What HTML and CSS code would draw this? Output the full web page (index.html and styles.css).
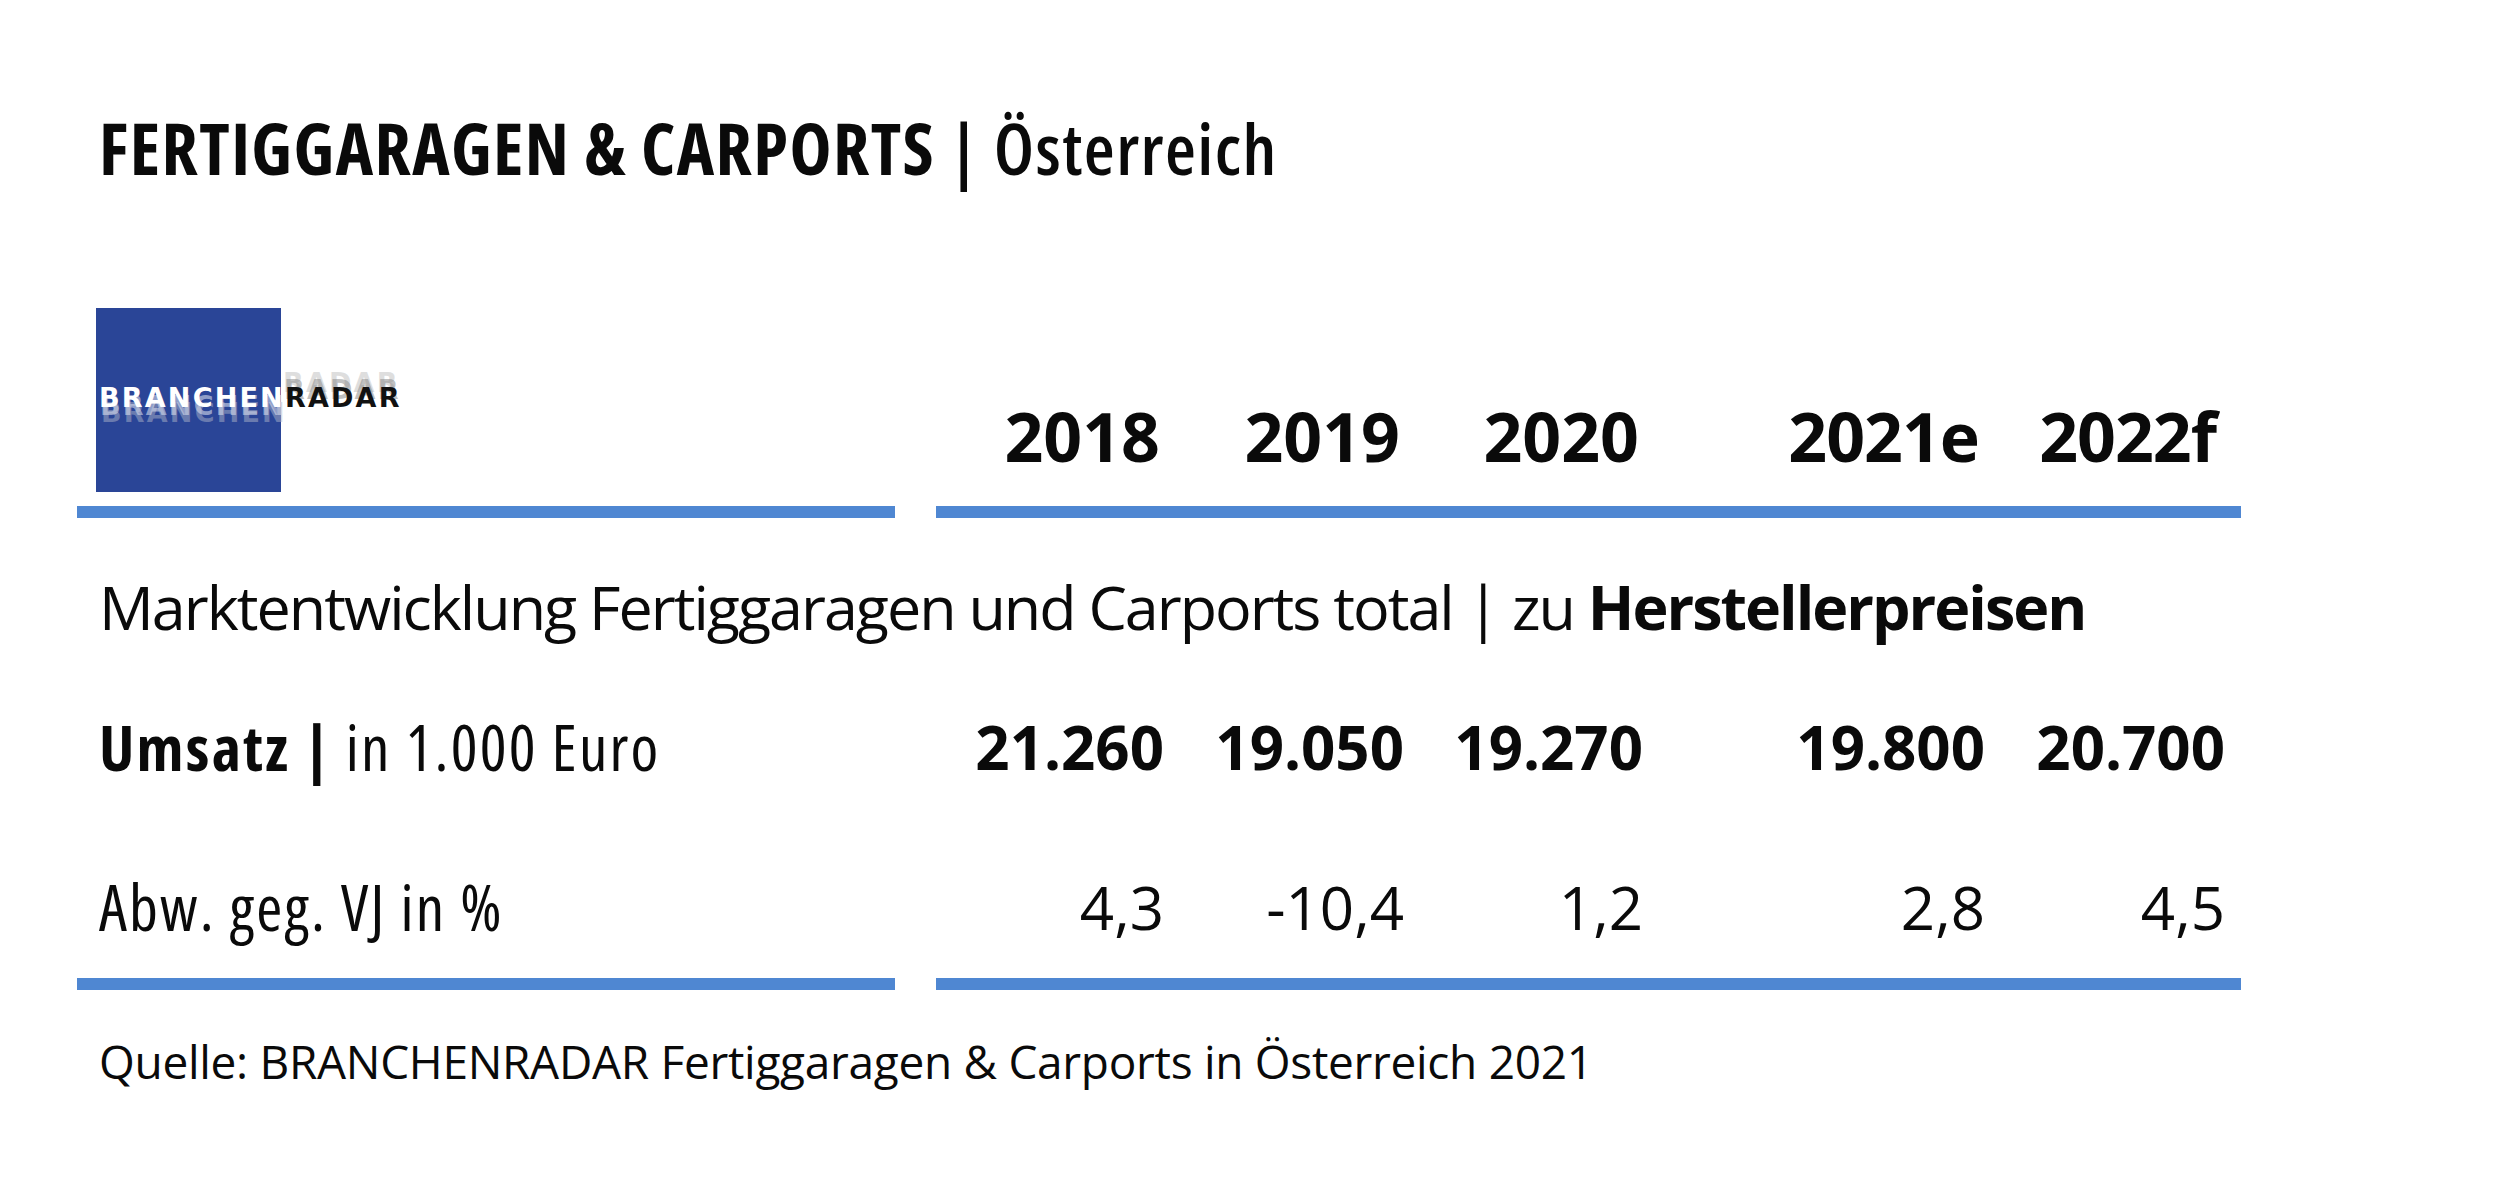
FILE: index.html
```html
<!DOCTYPE html>
<html lang="de">
<head>
<meta charset="utf-8">
<title>Fertiggaragen &amp; Carports | Österreich</title>
<link rel="stylesheet" href="styles.css">
</head>
<body>
<div class="page">
  <h1 class="title"><span class="title-main">FERTIGGARAGEN &amp; CARPORTS</span> <span class="title-sep">|</span> <span class="title-sub">Österreich</span></h1>

  <div class="table">
    <div class="logo-cell">
      <div class="logo">
        <div class="logo-box"></div>
        <div class="logo-text"><span class="lt-white">BRANCHEN</span><span class="lt-black">RADAR</span></div>
      </div>
    </div>
    <div class="year y1">2018</div>
    <div class="year y2">2019</div>
    <div class="year y3">2020</div>
    <div class="year y4">2021e</div>
    <div class="year y5">2022f</div>

    <div class="rule rule-left"></div>
    <div class="rule rule-right"></div>

    <div class="subtitle">Marktentwicklung Fertiggaragen und Carports total | zu <b>Herstellerpreisen</b></div>

    <div class="label row-umsatz"><b>Umsatz |</b> in 1.000 Euro</div>
    <div class="val bold row-umsatz c1">21.260</div>
    <div class="val bold row-umsatz c2">19.050</div>
    <div class="val bold row-umsatz c3">19.270</div>
    <div class="val bold row-umsatz c4">19.800</div>
    <div class="val bold row-umsatz c5">20.700</div>

    <div class="label row-abw">Abw. geg. VJ in %</div>
    <div class="val row-abw c1">4,3</div>
    <div class="val row-abw c2">-10,4</div>
    <div class="val row-abw c3">1,2</div>
    <div class="val row-abw c4">2,8</div>
    <div class="val row-abw c5">4,5</div>

    <div class="rule rule-left bottom"></div>
    <div class="rule rule-right bottom"></div>
  </div>

  <p class="source">Quelle: BRANCHENRADAR Fertiggaragen &amp; Carports in Österreich 2021</p>
</div>
</body>
</html>
```

FILE: styles.css
```css
html, body {
  margin: 0;
  padding: 0;
  background: #ffffff;
}

body {
  font-family: "Open Sans", "Noto Sans", "DejaVu Sans", sans-serif;
  color: #0a0a0a;
}

.page {
  width: 2500px;
  height: 1199px;
  padding-left: 77px;
  box-sizing: border-box;
  overflow: hidden;
}

.title {
  margin: 112px 0 0 22px;
  font-size: 71px;
  line-height: 1;
  font-weight: 700;
  font-stretch: 75%;
  letter-spacing: 1.4px;
  white-space: nowrap;
}

.title-sep,
.title-sub {
  font-weight: 650;
}

.table {
  display: grid;
  grid-template-columns: 818px 41px 228px 240px 239px 342px 240px 16px;
  grid-template-rows: 198px 12px auto auto auto 12px;
  margin-top: 125px;
}

/* header row */
.logo-cell {
  grid-column: 1;
  grid-row: 1;
}

.logo {
  position: relative;
  margin-left: 19px;
  width: 320px;
  height: 184px;
}

.logo-box {
  width: 185px;
  height: 184px;
  background: #2a4597;
}

.logo-text {
  position: absolute;
  left: 3px;
  top: 76px;
  font-family: "DejaVu Sans", sans-serif;
  font-weight: 700;
  font-size: 27px;
  line-height: 1;
  letter-spacing: 2.2px;
  white-space: nowrap;
}

.lt-white {
  color: #ffffff;
  text-shadow: 1px 8px 0 rgba(215, 220, 235, 0.6), 2px 15px 0 rgba(170, 178, 200, 0.5);
}

.lt-black {
  color: #111111;
  text-shadow: -1px -8px 0 rgba(140, 140, 140, 0.55), -2px -15px 0 rgba(190, 190, 190, 0.5);
}

.year {
  grid-row: 1;
  align-self: end;
  padding-bottom: 36px;
  font-size: 68px;
  line-height: 1;
  font-weight: 700;
  text-align: right;
}

.y1 { grid-column: 3; padding-right: 4px; }
.y2 { grid-column: 4; padding-right: 4px; }
.y3 { grid-column: 5; padding-right: 4px; }
.y4 { grid-column: 6; padding-right: 6px; letter-spacing: -1px; }
.y5 { grid-column: 7; padding-right: 9px; letter-spacing: -1px; }

/* rules */
.rule {
  grid-row: 2;
  height: 12px;
  background: #4f87d2;
}

.rule-left { grid-column: 1; }
.rule-right { grid-column: 3 / 9; }
.rule.bottom { grid-row: 6; }

/* subtitle */
.subtitle {
  grid-column: 1 / 9;
  grid-row: 3;
  margin-top: 58px;
  padding-left: 22px;
  font-size: 61px;
  letter-spacing: -2px;
  line-height: 1;
  white-space: nowrap;
}

.subtitle b {
  font-weight: 700;
}

/* data rows */
.label {
  grid-column: 1;
  padding-left: 22px;
  font-size: 63px;
  font-stretch: 75%;
  line-height: 1;
  white-space: nowrap;
}

.label.row-umsatz { letter-spacing: 2.2px; margin-top: 78px; }
.label.row-abw { letter-spacing: 2.2px; margin-top: 97px; }

.label b { font-weight: 700; }

.val {
  font-size: 60px;
  line-height: 1;
  text-align: right;
}

.val.bold { font-weight: 700; }

.row-umsatz { grid-row: 4; margin-top: 80px; }
.row-abw { grid-row: 5; margin-top: 99px; margin-bottom: 40px; }

.c1 { grid-column: 3; }
.c2 { grid-column: 4; }
.c3 { grid-column: 5; }
.c4 { grid-column: 6; }
.c5 { grid-column: 7; }

.source {
  margin: 48px 0 0 22px;
  font-size: 46px;
  letter-spacing: -0.3px;
  line-height: 1;
  white-space: nowrap;
}
```
